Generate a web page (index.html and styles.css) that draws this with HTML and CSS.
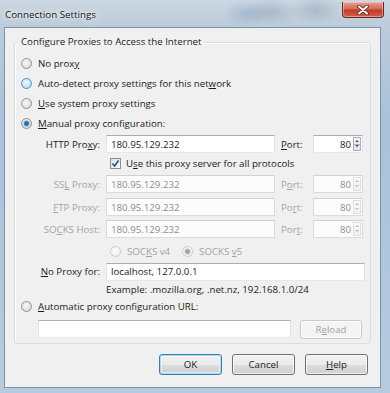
FILE: index.html
```html
<!DOCTYPE html>
<html lang="en">
<head>
    <meta charset="UTF-8">
    <title>Connection Settings</title>
    <link rel="stylesheet" href="styles.css">
</head>
<body>
    <div class="window">
        <div class="titlebar">
            <span class="title">Connection Settings</span>
            <div class="close">
                <svg width="12" height="10" viewBox="0 0 12 10">
                    <path d="M2 1.5 L10 8.5 M10 1.5 L2 8.5" stroke="#5a1f1a" stroke-width="3.6" stroke-linecap="round"/>
                    <path d="M2 1.5 L10 8.5 M10 1.5 L2 8.5" stroke="#fff" stroke-width="2" stroke-linecap="round"/>
                </svg>
            </div>
        </div>
        <div class="client">
            <fieldset class="group">
                <legend>Configure Proxies to Access the Internet</legend>
                <div class="opt"><span class="radio"></span><span>No prox<u>y</u></span></div>
                <div class="opt"><span class="radio hover"></span><span>Auto-detect proxy settings for this net<u>w</u>ork</span></div>
                <div class="opt"><span class="radio"></span><span><u>U</u>se system proxy settings</span></div>
                <div class="opt"><span class="radio checked"></span><span><u>M</u>anual proxy configuration:</span></div>

                <div class="manual">
                    <div class="lbl">HTTP Pro<u>x</u>y:</div>
                    <div class="field">180.95.129.232</div>
                    <div class="plbl"><u>P</u>ort:</div>
                    <div class="port"><span class="val">80</span><span class="spin"></span></div>

                    <div class="check-row">
                        <span class="check">
                            <svg width="9" height="9" viewBox="0 0 9 9"><path d="M1.5 4.5 L3.6 7 L7.6 1.6" fill="none" stroke="#2a4f8a" stroke-width="1.6"/></svg>
                        </span><span>U<u>s</u>e this proxy server for all protocols</span>
                    </div>

                    <div class="lbl off">SS<u>L</u> Proxy:</div>
                    <div class="field off">180.95.129.232</div>
                    <div class="plbl off">P<u>o</u>rt:</div>
                    <div class="port off"><span class="val">80</span><span class="spin"></span></div>

                    <div class="lbl off"><u>F</u>TP Proxy:</div>
                    <div class="field off">180.95.129.232</div>
                    <div class="plbl off">Po<u>r</u>t:</div>
                    <div class="port off"><span class="val">80</span><span class="spin"></span></div>

                    <div class="lbl off">SO<u>C</u>KS Host:</div>
                    <div class="field off">180.95.129.232</div>
                    <div class="plbl off">Por<u>t</u>:</div>
                    <div class="port off"><span class="val">80</span><span class="spin"></span></div>

                    <div class="socks off">
                        <span class="radio dim"></span><span>SOC<u>K</u>S v4</span>
                        <span class="radio dim checked gap"></span><span>SOCKS <u>v</u>5</span>
                    </div>

                    <div class="lbl"><u>N</u>o Proxy for:</div>
                    <div class="field wide">localhost, 127.0.0.1</div>

                    <div class="example">Example: .mozilla.org, .net.nz, 192.168.1.0/24</div>
                </div>

                <div class="opt auto"><span class="radio"></span><span><u>A</u>utomatic proxy configuration URL:</span></div>
                <div class="url-row">
                    <div class="field url"></div>
                    <div class="btn reload">R<u>e</u>load</div>
                </div>
            </fieldset>

            <div class="buttons">
                <div class="btn default">OK</div>
                <div class="btn">Cancel</div>
                <div class="btn"><u>H</u>elp</div>
            </div>
        </div>
    </div>
</body>
</html>
```

FILE: styles.css
```css
body {
    margin: 0;
    font-family: "Open Sans", "Noto Sans", sans-serif;
    font-size: 9.7px;
    color: #1b1b1b;
}

.window {
    display: flex;
    flex-direction: column;
    width: 390px;
    height: 393px;
    box-sizing: border-box;
    padding: 0 9px 5px 4px;
    background:
        radial-gradient(ellipse 30px 14px at 270px 12px, rgba(120, 140, 160, 0.35), transparent),
        radial-gradient(ellipse 26px 14px at 316px 10px, rgba(120, 140, 160, 0.35), transparent),
        radial-gradient(ellipse 22px 14px at 245px 14px, rgba(120, 150, 190, 0.35), transparent),
        linear-gradient(180deg, #cbd7e2 0, #bccbda 28px, #a9c1da 120px, #b7cbe0 393px);
}

.titlebar {
    display: flex;
    align-items: flex-start;
    justify-content: space-between;
    height: 27px;
}

.title {
    margin: 8px 0 0 1px;
    font-size: 9.8px;
    color: #111;
    text-shadow: 0 0 6px #fff, 0 0 3px #fff;
}

.close {
    display: flex;
    align-items: center;
    justify-content: center;
    width: 40px;
    height: 15px;
    margin: 2px -3px 0 0;
    border: 1px solid #6b2b24;
    border-top: none;
    border-radius: 0 0 4px 4px;
    background: linear-gradient(180deg, #e8a093 0, #d46a58 45%, #c13a28 55%, #d0604c 100%);
    box-shadow: inset 0 0 0 1px rgba(255, 255, 255, 0.35);
}

.client {
    flex: 1;
    background: #f0f0f0;
    border: 1px solid #7e93a8;
    padding: 7px 9px 0 9px;
}

.group {
    margin: 0;
    padding: 0 0 4px 0;
    border: 1px solid #d5dfe5;
    border-radius: 3px;
    box-shadow: inset 1px 1px 0 #fff;
}

.group legend {
    margin-left: 3px;
    padding: 0 3px;
    line-height: 14px;
}

.opt {
    display: flex;
    align-items: center;
    height: 20px;
    padding-left: 6px;
}

.opt:first-of-type {
    margin-top: 4px;
}

.opt.auto {
    height: 18px;
}

.radio {
    display: inline-block;
    flex: none;
    width: 11px;
    height: 11px;
    margin-right: 6px;
    box-sizing: border-box;
    border: 1px solid #8f9296;
    border-radius: 50%;
    background: radial-gradient(circle at 45% 40%, #fbfbfb 0, #e2e2e2 55%, #cfcfcf 100%);
}

.radio.hover {
    border-color: #4d91c6;
    background: radial-gradient(circle at 45% 40%, #f2f9fe 0, #c8e4f8 55%, #9dcbec 100%);
}

.radio.checked {
    background:
        radial-gradient(circle, #1f5f9c 0, #2f77b4 1.8px, #7ab4de 2.8px, transparent 3.4px),
        radial-gradient(circle at 45% 40%, #fbfbfb 0, #e2e2e2 55%, #cfcfcf 100%);
}

.radio.dim {
    border-color: #c8cacc;
    background: radial-gradient(circle at 45% 40%, #fbfbfb 0, #f0f0f0 100%);
}

.radio.dim.checked {
    background:
        radial-gradient(circle, #9a9a9a 0, #a8a8a8 1.8px, #cfcfcf 2.8px, transparent 3.4px),
        radial-gradient(circle at 45% 40%, #fbfbfb 0, #f0f0f0 100%);
}

.manual {
    display: grid;
    grid-template-columns: 85px 169px 26px 50px;
    grid-template-rows: 20px 18px 24px 22px 22px 22px 19px 16px;
    column-gap: 6px;
    align-items: center;
    margin-top: 1px;
}

.lbl {
    text-align: right;
    white-space: nowrap;
}

.plbl {
    white-space: nowrap;
}

.off {
    color: #a3a3a3;
}

.field,
.port {
    display: flex;
    align-items: center;
    height: 18px;
    box-sizing: border-box;
    padding: 0 4px;
    background: #fff;
    border: 1px solid #e2e3ea;
    border-top-color: #abadb3;
    border-bottom-color: #e3e9ef;
    white-space: nowrap;
}

.field.off,
.port.off {
    border-color: #d9dbdf;
    border-top-color: #cfd1d4;
    color: #8d8d8d;
    background: #fcfcfc;
}

.field.wide {
    grid-column: 2 / 5;
    margin-right: -2px;
}

.port {
    justify-content: flex-end;
    padding: 0 1px 0 4px;
}

.port .val {
    margin-right: 2px;
}

.spin {
    display: flex;
    flex-direction: column;
    width: 8px;
    height: 14px;
    background:
        linear-gradient(to bottom, transparent 6.5px, #a9b0b8 6.5px, #a9b0b8 7.5px, transparent 7.5px),
        linear-gradient(180deg, #f3f4f6, #dfe3e8);
    border: 1px solid #a9b0b8;
    box-sizing: border-box;
}

.spin::before,
.spin::after {
    content: "";
    display: block;
    margin: 1px auto 0;
    width: 0;
    height: 0;
    border-left: 2px solid transparent;
    border-right: 2px solid transparent;
}

.spin::before {
    border-bottom: 2px solid #4a5b6e;
    margin-top: 2px;
}

.spin::after {
    border-top: 2px solid #4a5b6e;
    margin-top: 3px;
}

.off .spin {
    border-color: #dadde1;
    background: linear-gradient(180deg, #fbfbfb, #f0f1f2);
}

.off .spin::before {
    border-bottom-color: #b9bec4;
}

.off .spin::after {
    border-top-color: #b9bec4;
}

.check-row {
    grid-column: 2 / 5;
    display: flex;
    align-items: center;
    padding-left: 4px;
}

.check {
    display: flex;
    align-items: center;
    justify-content: center;
    width: 11px;
    height: 11px;
    margin-right: 5px;
    box-sizing: border-box;
    border: 1px solid #8e8f8f;
    background: linear-gradient(135deg, #dcdcdc, #fdfdfd);
}

.socks {
    grid-column: 2 / 5;
    display: flex;
    align-items: center;
    padding-left: 4px;
}

.socks .gap {
    margin-left: 12px;
}

.example {
    grid-column: 2 / 5;
}

.url-row {
    display: flex;
    align-items: center;
    height: 20px;
    margin-top: 4px;
    padding-left: 23px;
}

.field.url {
    width: 253px;
    margin-right: 9px;
}

.btn {
    display: flex;
    align-items: center;
    justify-content: center;
    width: 63px;
    height: 21px;
    box-sizing: border-box;
    border: 1px solid #707070;
    border-radius: 3px;
    background: linear-gradient(180deg, #f2f2f2 0, #ebebeb 50%, #dddddd 51%, #cfcfcf 100%);
    box-shadow: inset 0 0 0 1px rgba(255, 255, 255, 0.7);
}

.btn.reload {
    width: 62px;
    height: 19px;
    color: #a3a3a3;
    border-color: #c9c9c9;
    background: #f4f4f4;
}

.btn.default {
    border-color: #3c7fb1;
    box-shadow: inset 0 0 0 1px #9fdcf7, inset 0 0 0 2px rgba(255, 255, 255, 0.5);
}

.buttons {
    display: flex;
    justify-content: flex-end;
    gap: 10px;
    margin: 10px 3px 0 0;
}
```
